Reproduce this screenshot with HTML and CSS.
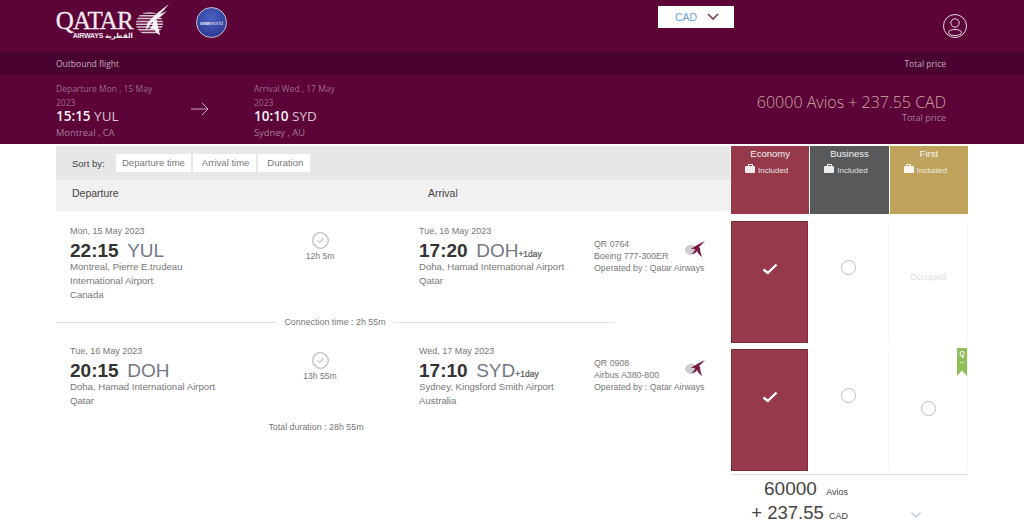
FILE: index.html
```html
<!DOCTYPE html>
<html lang="en">
<head>
<meta charset="utf-8">
<title>Qatar Airways flight selection</title>
<link rel="stylesheet" href="styles.css">
</head>
<body>
<header class="topbar">
  <div class="logo">
    <div class="logo-words">
      <span class="logo-qatar">QATAR</span>
      <span class="logo-sub">AIRWAYS <span class="logo-ar" lang="ar">القطرية</span></span>
    </div>
    <svg class="logo-bird" width="38" height="34" viewBox="0 0 38 34">
      <defs><clipPath id="globe"><ellipse cx="16.500" cy="20.500" rx="13.500" ry="11.500"/></clipPath></defs>
      <g clip-path="url(#globe)" stroke="#d9c3d0" stroke-width="1.500">
        <path d="M0 10H34M0 12.800H34M0 15.600H34M0 18.400H34M0 21.200H34M0 24H34M0 26.800H34M0 29.600H34"/>
      </g>
      <path d="M14 21C18 15 25 9 36 1C33 5 30 8 27 11C30 10 32 9 34 8C30 12 26 15 23 17C17 19 16 25 13 27Z" fill="#f4ecf1"/>
      <path d="M20 18L24 17C24 22 26 27 27 32C24 31 22 28 21 26C19 26 18 27 17 26C19 24 20 21 20 18Z" fill="#fbf6f9"/>
    </svg>
  </div>
  <div class="oneworld"><span class="ow-one">one</span><span class="ow-world">world</span></div>
  <div class="currency">
    <span>CAD</span>
    <svg width="12" height="8" viewBox="0 0 12 8"><path d="M1 1L6 6L11 1" fill="none" stroke="#7d3a5c" stroke-width="1.600"/></svg>
  </div>
  <svg class="user" width="26" height="26" viewBox="0 0 26 26">
    <circle cx="13" cy="13" r="11.500" fill="none" stroke="#e6dbe2" stroke-width="1"/>
    <circle cx="13" cy="10" r="4.200" fill="none" stroke="#e6dbe2" stroke-width="1"/>
    <ellipse cx="13" cy="19.500" rx="6.500" ry="3" fill="none" stroke="#e6dbe2" stroke-width="1"/>
  </svg>
</header>

<div class="subbar">
  <span>Outbound flight</span>
  <span class="subbar-right">Total price</span>
</div>

<section class="summary">
  <div class="place">
    <p class="place-date">Departure Mon , 15 May 2023</p>
    <p class="place-time"><b>15:15</b> YUL</p>
    <p class="place-city">Montreal , CA</p>
  </div>
  <svg class="arrow" width="18" height="14" viewBox="0 0 18 14"><path d="M0 7H17M11 1L17 7L11 13" fill="none" stroke="#c9a9bb" stroke-width="1"/></svg>
  <div class="place">
    <p class="place-date">Arrival Wed , 17 May 2023</p>
    <p class="place-time"><b>10:10</b> SYD</p>
    <p class="place-city">Sydney , AU</p>
  </div>
  <div class="total">
    <p class="total-price">60000 Avios + 237.55 CAD</p>
    <p class="total-label">Total price</p>
  </div>
</section>

<main class="content">
  <section class="flights">
    <div class="sortbar">
      <span class="sort-label">Sort by:</span>
      <div class="sort-buttons">
        <span class="sort-btn">Departure time</span>
        <span class="sort-btn">Arrival time</span>
        <span class="sort-btn">Duration</span>
      </div>
    </div>
    <div class="colhead">
      <span class="colhead-dep">Departure</span>
      <span>Arrival</span>
    </div>

    <div class="segment seg-one">
      <div class="stop">
        <p class="stop-date">Mon, 15 May 2023</p>
        <p class="stop-time"><b>22:15</b>&nbsp; <span class="code">YUL</span></p>
        <p class="stop-place">Montreal, Pierre E.trudeau International Airport</p>
        <p class="stop-place">Canada</p>
      </div>
      <div class="duration">
        <svg class="clock" width="17" height="17" viewBox="0 0 17 17"><circle cx="8.500" cy="8.500" r="7.800" fill="none" stroke="#a5a5a5" stroke-width="1"/><path d="M5.500 8.500L7.800 10.600L11.500 6.600" fill="none" stroke="#a5a5a5" stroke-width="1"/></svg>
        <span>12h 5m</span>
      </div>
      <div class="stop">
        <p class="stop-date">Tue, 16 May 2023</p>
        <p class="stop-time"><b>17:20</b>&nbsp; <span class="code">DOH</span><b class="plus">+1day</b></p>
        <p class="stop-place">Doha, Hamad International Airport</p>
        <p class="stop-place">Qatar</p>
      </div>
      <div class="carrier">
        <div class="carrier-text">
          <p>QR 0764</p>
          <p>Boeing 777-300ER</p>
          <p>Operated by : Qatar Airways</p>
        </div>
        <svg class="tail" width="20" height="17" viewBox="0 0 20 17">
          <ellipse cx="6" cy="9" rx="6" ry="5" fill="#cfcdcf"/>
          <path d="M6 8C10 5 15 2 20 0C17 3 16 4 14 6L15 7C15 10 16 13 17 16C14 14 13 12 12 10C11 12 9 13 6 13C9 11 10 10 10 8Z" fill="#7a1b4c"/>
        </svg>
      </div>
    </div>

    <div class="connection"><span>Connection time : 2h 55m</span></div>

    <div class="segment seg-two">
      <div class="stop">
        <p class="stop-date">Tue, 16 May 2023</p>
        <p class="stop-time"><b>20:15</b>&nbsp; <span class="code">DOH</span></p>
        <p class="stop-place">Doha, Hamad International Airport</p>
        <p class="stop-place">Qatar</p>
      </div>
      <div class="duration">
        <svg class="clock" width="17" height="17" viewBox="0 0 17 17"><circle cx="8.500" cy="8.500" r="7.800" fill="none" stroke="#a5a5a5" stroke-width="1"/><path d="M5.500 8.500L7.800 10.600L11.500 6.600" fill="none" stroke="#a5a5a5" stroke-width="1"/></svg>
        <span>13h 55m</span>
      </div>
      <div class="stop">
        <p class="stop-date">Wed, 17 May 2023</p>
        <p class="stop-time"><b>17:10</b>&nbsp; <span class="code">SYD</span><b class="plus">+1day</b></p>
        <p class="stop-place">Sydney, Kingsford Smith Airport</p>
        <p class="stop-place">Australia</p>
      </div>
      <div class="carrier">
        <div class="carrier-text">
          <p>QR 0908</p>
          <p>Airbus A380-800</p>
          <p>Operated by : Qatar Airways</p>
        </div>
        <svg class="tail" width="20" height="17" viewBox="0 0 20 17">
          <ellipse cx="6" cy="9" rx="6" ry="5" fill="#cfcdcf"/>
          <path d="M6 8C10 5 15 2 20 0C17 3 16 4 14 6L15 7C15 10 16 13 17 16C14 14 13 12 12 10C11 12 9 13 6 13C9 11 10 10 10 8Z" fill="#7a1b4c"/>
        </svg>
      </div>
    </div>
    <p class="total-duration">Total duration : 28h 55m</p>
  </section>

  <aside class="fares">
    <div class="fare-heads">
      <div class="fare-head economy"><span>Economy</span><span class="bag"><i class="case"></i>Included</span></div>
      <div class="fare-head business"><span>Business</span><span class="bag"><i class="case"></i>Included</span></div>
      <div class="fare-head first"><span>First</span><span class="bag"><i class="case"></i>Included</span></div>
    </div>

    <div class="fare-row">
      <div class="cell selected"><svg width="16" height="12" viewBox="0 0 16 12"><path d="M1.500 6.500L5.800 10L14.500 1.500" fill="none" stroke="#fff" stroke-width="2.400"/></svg></div>
      <div class="cell radio-cell up"><i class="radio"></i></div>
      <div class="cell occupied">Occupied</div>
    </div>
    <div class="fare-row">
      <div class="cell selected"><svg width="16" height="12" viewBox="0 0 16 12"><path d="M1.500 6.500L5.800 10L14.500 1.500" fill="none" stroke="#fff" stroke-width="2.400"/></svg></div>
      <div class="cell radio-cell up"><i class="radio"></i></div>
      <div class="cell radio-cell low"><i class="radio"></i><span class="ribbon">Q<br>..</span></div>
    </div>

    <div class="fare-total">
      <div class="fare-amounts">
        <p class="amount-a">60000 <small>Avios</small></p>
        <p class="amount-b">+ 237.55 <small>CAD</small></p>
      </div>
      <svg class="more" width="10" height="6" viewBox="0 0 10 6"><path d="M0.500 0.500L5 5L9.500 0.500" fill="none" stroke="#a9cdea" stroke-width="1.200"/></svg>
    </div>
  </aside>
</main>
</body>
</html>
```
FILE: styles.css
```css
html, body { margin: 0; padding: 0; height: 523px; overflow: hidden; background: #fff; }
body { font-family: "Liberation Sans", Arial, sans-serif; color: #666; }
p { margin: 0; }

.topbar { height: 52px; background: #5c0338; display: flex; align-items: flex-start; padding-left: 56px; box-sizing: border-box; }
.logo { display: flex; width: 114px; height: 38px; padding-top: 4px; box-sizing: border-box; }
.logo-words { display: flex; flex-direction: column; align-items: flex-end; width: 77px; flex: none; color: #f2e9ee; }
.logo-qatar { font-family: "Liberation Serif", serif; font-size: 25px; line-height: 22px; padding-top: 6px; letter-spacing: -0.8px; -webkit-text-stroke: .3px #f2e9ee; }
.logo-sub { font-size: 7px; font-weight: bold; line-height: 8px; letter-spacing: -0.2px; white-space: nowrap; }
.logo-ar { font-family: "DejaVu Sans", sans-serif; }
.logo-bird { margin-top: -1px; flex: none; }
.oneworld { margin: 7px 0 0 26px; width: 31px; height: 31px; border-radius: 50%; background: radial-gradient(circle at 50% 35%, #4a61c0, #2d3c98 75%); border: 1px solid #c9c3d6; box-sizing: border-box; display: flex; align-items: center; justify-content: center; font-size: 5.500px; color: #fff; }
.ow-one { font-weight: bold; }
.ow-world { opacity: .75; }
.currency { margin: 6px 0 0 431px; width: 76px; height: 22px; background: #fff; display: flex; align-items: center; gap: 10px; padding-left: 17px; box-sizing: border-box; font-size: 10.500px; color: #6ba3dd; }
.user { margin: 13px 0 0 208px; }

.subbar { height: 23px; background: #4a0230; display: flex; align-items: center; justify-content: space-between; padding: 0 78px 0 56px; font: 8.500px "Open Sans", sans-serif; color: #c6adbb; }

.summary { height: 69px; background: #5c0338; display: flex; padding: 7px 78px 0 56px; box-sizing: border-box; color: #f4eaef; font-family: "Open Sans", sans-serif; }
.place { width: 100px; flex: none; }
.place-date { font-size: 8.500px; line-height: 14px; color: #9c6b87; }
.place-time { font-size: 13.500px; line-height: 13px; color: #d9c4cf; }
.place-time b { font-weight: 600; color: #f8f2f5; }
.place-city { font-size: 9.300px; line-height: 19px; color: #a67d95; }
.arrow { margin: 20px 45px 0 35px; flex: none; }
.total { margin-left: auto; text-align: right; padding-top: 10px; }
.total-price { font-size: 16px; line-height: 21px; color: #cdaa9f; font-weight: 300; }
.total-label { font-size: 9px; line-height: 9px; color: #a67d95; }

.content { margin-top: 2px; padding-left: 56px; display: flex; }
.flights { width: 674px; flex: none; }
.sortbar { height: 34px; background: #e7e7e7; display: flex; align-items: center; padding-left: 16px; font-size: 9.500px; color: #444; }
.sort-label { width: 44px; }
.sort-buttons { display: flex; gap: 2px; }
.sort-btn { background: #fff; height: 18px; line-height: 18px; padding: 0 7px 0 9px; color: #777; }
.sort-btn:first-child { padding-left: 6px; padding-right: 6px; }
.colhead { height: 31px; background: #f1f1f1; display: flex; align-items: center; padding: 0 0 6px 16px; box-sizing: border-box; font-size: 10.500px; color: #444; }
.colhead-dep { width: 356px; }

.segment { display: grid; grid-template-columns: 200px 149px 175px 1fr; padding-left: 14px; box-sizing: border-box; }
.seg-one { height: 104px; padding-top: 15px; }
.seg-two { height: 79px; padding-top: 16.500px; }
.stop-date { font-size: 9px; line-height: 11px; color: #777; }
.stop-time { font-size: 19px; line-height: 27px; color: #777; white-space: nowrap; height: 23px; }
.stop-time b { color: #333; font-weight: bold; }
.stop-time .code { font-size: 19px; color: #737885; margin-left: -2px; }
.stop-time .plus { font-size: 8.500px; font-weight: normal; color: #555; -webkit-text-stroke: .2px #555; }
.stop-place { font-size: 9.600px; line-height: 14px; color: #777; max-width: 150px; }
.duration { display: flex; flex-direction: column; align-items: center; padding-top: 6px; gap: 2px; font-size: 8.600px; color: #777; width: 100px; }
.carrier { display: flex; padding-top: 11.500px; }
.carrier-text { width: 100px; font-size: 8.800px; line-height: 12px; color: #777; white-space: nowrap; }
.tail { margin-top: 3px; margin-left: -9px; }

.connection { display: flex; align-items: center; justify-content: center; width: 558px; font-size: 8.900px; color: #777; height: 14px; gap: 8px; }
.connection::before, .connection::after { content: ""; flex: 1; height: 1px; background: #ddd; }
.total-duration { width: 520px; text-align: center; font-size: 8.900px; color: #777; margin-top: 14px; }

.fares { width: 237px; margin-left: 1px; flex: none; }
.fare-heads { display: grid; grid-template-columns: repeat(3, 1fr); gap: 1px; height: 68px; }
.fare-head { display: flex; flex-direction: column; align-items: center; padding-top: 2px; font-size: 9.500px; color: #f3f3f3; line-height: 12px; }
.economy { background: #963a4b; }
.business { background: #58595b; }
.first { background: #bfa35d; }
.bag { display: flex; align-items: center; font-size: 8px; gap: 3px; margin: 5px 7px 0 0; opacity: .9; }
.case { width: 10px; height: 7px; background: #fff; border-radius: 1px; margin-top: -3px; position: relative; }
.case::before { content: ""; position: absolute; left: 2.500px; top: -2px; width: 3px; height: 2px; border: 1px solid #fff; border-bottom: 0; box-sizing: content-box; }
.fare-row { display: grid; grid-template-columns: repeat(3, 1fr); gap: 1px; height: 122px; margin-top: 7px; }
.fare-row + .fare-row { margin-top: 6px; }
.cell { display: flex; align-items: center; justify-content: center; box-sizing: border-box; position: relative; border-right: 1px solid #f3f3f3; }
.selected { background: #963a4b; border: 1px solid #7d2a3a; margin-right: 1px; padding-bottom: 27px; }
.up { padding-bottom: 29px; }
.low { padding-bottom: 3px; }
.radio { width: 13px; height: 13px; border-radius: 50%; border: 1px solid #bbb; display: block; }
.occupied { font-size: 8.500px; color: #ddd; padding-bottom: 11px; }
.ribbon { position: absolute; top: -1px; right: 0; width: 10px; height: 28px; background: #8fbd56; color: #fff; font-size: 6.500px; line-height: 7px; text-align: center; font-weight: bold; clip-path: polygon(0 0, 100% 0, 100% 100%, 50% 80%, 0 100%); padding-top: 2px; box-sizing: border-box; }

.fare-total { border-top: 1px solid #ddd; margin-top: 3px; position: relative; color: #444; }
.fare-amounts { width: 117px; text-align: right; }
.amount-a { font-size: 19px; line-height: 22px; margin-top: 3px; white-space: nowrap; }
.amount-a small { font-size: 9px; margin-left: 4px; }
.amount-b { font-size: 18.500px; line-height: 19px; white-space: nowrap; }
.amount-b small { font-size: 9px; }
.more { position: absolute; left: 180px; top: 37px; }
```
